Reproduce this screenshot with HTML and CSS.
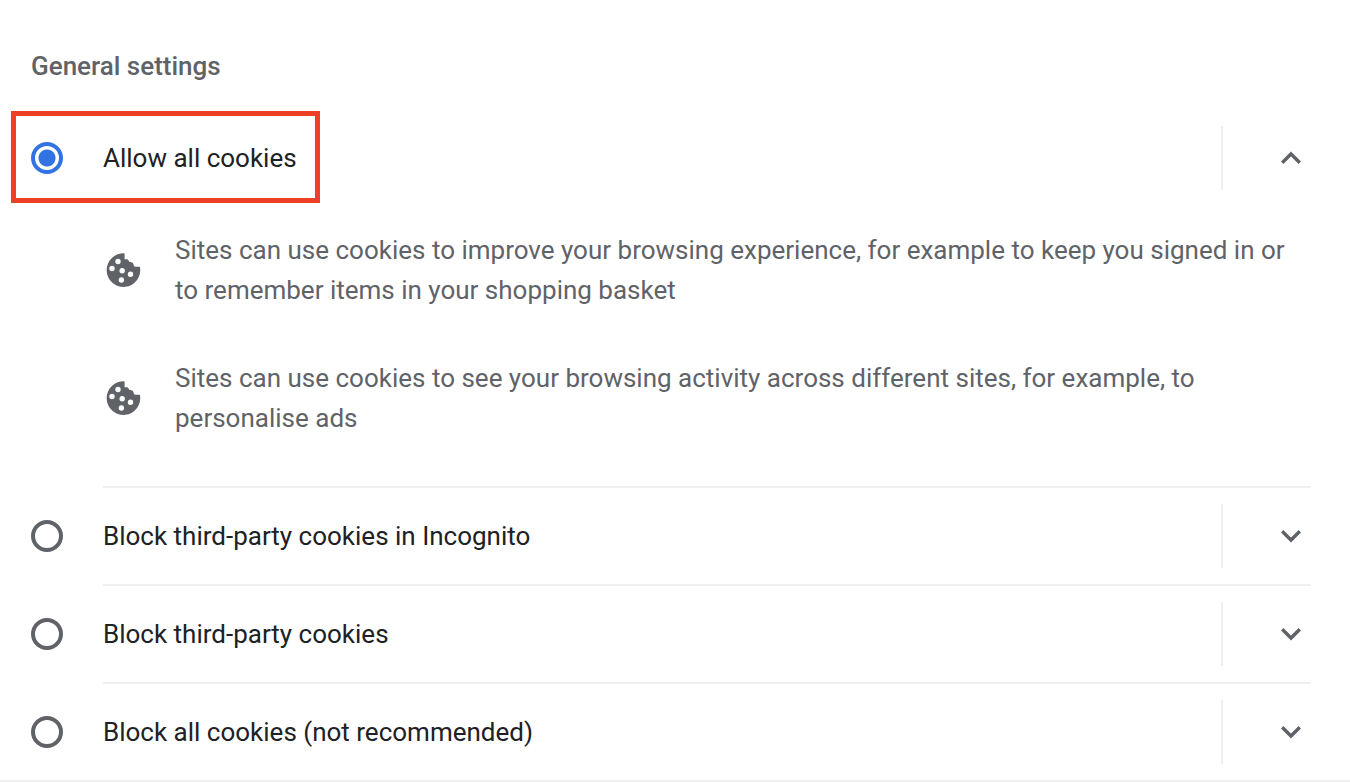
FILE: index.html
```html
<!DOCTYPE html>
<html lang="en">
<head>
<meta charset="utf-8">
<title>Cookie settings</title>
<link rel="stylesheet" href="styles.css">
</head>
<body>
<svg class="defs" aria-hidden="true">
<defs>
<symbol id="cookie" viewBox="0 0 36 36"><path fill-rule="evenodd" d="M19.600 1.400A16.800 16.800 0 1 0 34.900 14.800H30.500Q28.700 14.800 28.500 12.400Q28.300 10.300 26.200 10.300Q23.800 10.300 23.500 8.500Q23.200 7.300 21.500 7.300H19.600ZM13 9.500m-2.700 0a2.700 2.700 0 1 0 5.400 0a2.700 2.700 0 1 0-5.400 0M7 16.500m-2.700 0a2.700 2.700 0 1 0 5.400 0a2.700 2.700 0 1 0-5.400 0M17.200 18.800m-2.700 0a2.700 2.700 0 1 0 5.400 0a2.700 2.700 0 1 0-5.400 0M16.400 28m-2.700 0a2.700 2.700 0 1 0 5.400 0a2.700 2.700 0 1 0-5.400 0M25.500 22.200m-2.700 0a2.700 2.700 0 1 0 5.400 0a2.700 2.700 0 1 0-5.400 0"/></symbol>
<symbol id="down" viewBox="0 0 24 16"><path d="M3.200 3.200L12 12L20.800 3.200" fill="none" stroke="currentColor" stroke-width="3.400"/></symbol>
<symbol id="up" viewBox="0 0 24 16"><path d="M3.200 12.800L12 4L20.800 12.800" fill="none" stroke="currentColor" stroke-width="3.400"/></symbol>
</defs>
</svg>
<main class="settings">
<h1 class="title">General settings</h1>
<section class="option first">
<label class="choice highlighted"><input class="radio" type="radio" name="cookies" checked><span>Allow all cookies</span></label>
<button class="toggle" type="button" aria-label="Hide details" aria-expanded="true"><svg class="chevron"><use href="#up"/></svg></button>
</section>
<ul class="details">
<li class="detail"><svg class="cookie"><use href="#cookie"/></svg><p class="text">Sites can use cookies to improve your browsing experience, for example to keep you signed in or to remember items in your shopping basket</p></li>
<li class="detail"><svg class="cookie"><use href="#cookie"/></svg><p class="text">Sites can use cookies to see your browsing activity across different sites, for example, to personalise ads</p></li>
</ul>
<section class="option">
<label class="choice"><input class="radio" type="radio" name="cookies"><span>Block third-party cookies in Incognito</span></label>
<button class="toggle" type="button" aria-label="Show details" aria-expanded="false"><svg class="chevron"><use href="#down"/></svg></button>
</section>
<section class="option">
<label class="choice"><input class="radio" type="radio" name="cookies"><span>Block third-party cookies</span></label>
<button class="toggle" type="button" aria-label="Show details" aria-expanded="false"><svg class="chevron"><use href="#down"/></svg></button>
</section>
<section class="option">
<label class="choice"><input class="radio" type="radio" name="cookies"><span>Block all cookies (not recommended)</span></label>
<button class="toggle" type="button" aria-label="Show details" aria-expanded="false"><svg class="chevron"><use href="#down"/></svg></button>
</section>
</main>
</body>
</html>
```

FILE: styles.css
```css
* { box-sizing: border-box; }
body {
  margin: 0;
  background: #fff;
  color: #202124;
  font: 26px/40px Roboto, sans-serif;
}
.defs { position: absolute; width: 0; height: 0; }
.settings {
  padding-top: 46px;
  border-bottom: 2px solid #efefef;
}
.title {
  margin: 0 0 25px 31px;
  color: #5f6368;
  font-size: 26px;
  font-weight: 500;
}
.option {
  display: flex;
  align-items: center;
  justify-content: space-between;
  min-height: 98px;
  margin-right: 39px;
  padding: 2px 0 0 31px;
  background: linear-gradient(#efefef, #efefef) 103px 0 / 100% 2px no-repeat;
}
.first { min-height: 94px; padding: 0 0 0 11px; background: none; }
.choice {
  display: flex;
  align-items: center;
  gap: 40px;
}
.highlighted {
  align-self: flex-start;
  min-height: 92px;
  padding: 2px 18px 0 15px;
  border: 5px solid #ee4027;
}
.radio {
  appearance: none;
  flex: none;
  width: 32px;
  height: 32px;
  margin: 0;
  border: 4px solid #5f6368;
  border-radius: 50%;
}
.radio:checked {
  border-color: #3273e3;
  background: radial-gradient(circle, #3273e3 8px, transparent 9px);
}
.toggle {
  display: flex;
  align-items: center;
  justify-content: flex-end;
  width: 90px;
  height: 64px;
  padding: 0 8px 0 0;
  border: 0;
  border-left: 2px solid #efefef;
  background: none;
  color: #5f6368;
}
.chevron { width: 24px; height: 16px; }
.details {
  margin: 0;
  padding: 25px 39px 48px 105px;
  list-style: none;
}
.detail {
  display: flex;
  align-items: center;
  gap: 34px;
  color: #5f6368;
}
.detail + .detail { margin-top: 48px; }
.cookie { flex: none; width: 36px; height: 36px; fill: #5f6368; }
.text { margin: 0; }
```
